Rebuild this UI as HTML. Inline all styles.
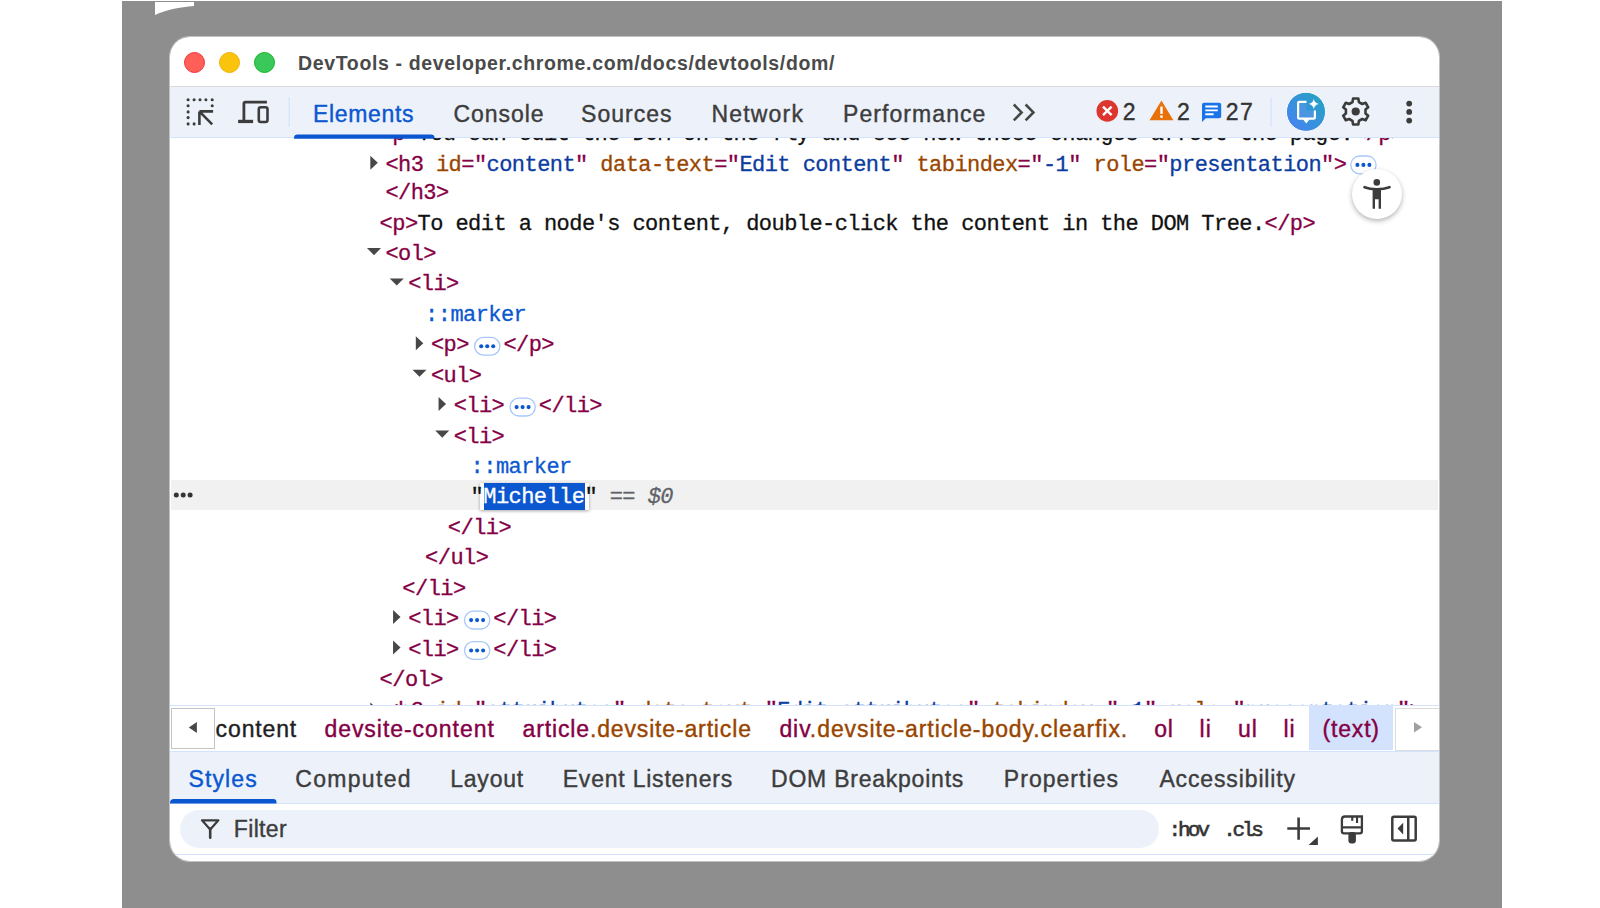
<!DOCTYPE html>
<html><head><meta charset="utf-8"><style>
html,body{margin:0;padding:0}
body{width:1600px;height:908px;position:relative;overflow:hidden;background:#fff;font-family:"Liberation Sans",sans-serif}
.a{position:absolute}
#bg{left:122px;top:1px;width:1380px;height:907px;background:#8e8e8e}
#win{left:0;top:0;width:1600px;height:908px;clip-path:inset(37px 161px 47px 170px round 20px);background:#fff}
#winb{left:170px;top:37px;width:1269px;height:824px;border-radius:20px;box-shadow:0 0 0 1px #c2c2c2;pointer-events:none}
.s{position:absolute;white-space:pre;font-family:"Liberation Sans",sans-serif;-webkit-text-stroke:0.4px currentColor}
.m{position:absolute;white-space:pre;font-family:"Liberation Mono",monospace;font-size:22px;line-height:30px;letter-spacing:-0.56px;color:#111;-webkit-text-stroke:0.3px currentColor}
.tg{color:#850045}
.an{color:#994500}
.av{color:#0b3ca0}
.ps{color:#0b57d0}
.pill{display:inline-block;position:relative;width:24px;height:17px;border:1.3px solid #a8c7fa;border-radius:10px;vertical-align:middle}
svg{position:absolute;left:0;top:0}
</style></head><body>
<div id="bg" class="a"></div>
<svg width="1600" height="40" style="left:0;top:0"><path d="M155 2 H194 V6 C180 7 165 10 155 15 Z" fill="#fff"/></svg>
<div id="win" class="a">
<div class="a" style="left:170px;top:37px;width:1270px;height:49px;background:#fff"></div>
<div class="a" style="left:183.9px;top:51.9px;width:19.2px;height:19.2px;border-radius:50%;background:#ff5f57;border:1px solid #f0313a"></div>
<div class="a" style="left:219.1px;top:51.9px;width:19.2px;height:19.2px;border-radius:50%;background:#fac40c;border:1px solid #eeb00f"></div>
<div class="a" style="left:254.20000000000002px;top:51.9px;width:19.2px;height:19.2px;border-radius:50%;background:#39c859;border:1px solid #12b424"></div>
<div class="s" style="left:298px;top:54.4px;font-size:19.5px;line-height:19.5px;font-weight:bold;letter-spacing:.65px;-webkit-text-stroke:0;color:#4a4a4a">DevTools - developer.chrome.com/docs/devtools/dom/</div>
<div class="a" style="left:170px;top:86px;width:1270px;height:1px;background:#dadada"></div>
<div class="a" style="left:170px;top:87px;width:1270px;height:50px;background:#edf2fa"></div>
<div class="a" style="left:170px;top:137px;width:1270px;height:1px;background:#d3e3fd"></div>
<div class="s" style="left:313.00px;top:103.00px;font-size:23px;line-height:23px;letter-spacing:0.66px;color:#0b57d0;font-weight:400;">Elements</div>
<div class="s" style="left:453.40px;top:103.00px;font-size:23px;line-height:23px;letter-spacing:0.98px;color:#3d3d3d;font-weight:400;">Console</div>
<div class="s" style="left:581.10px;top:103.00px;font-size:23px;line-height:23px;letter-spacing:1.02px;color:#3d3d3d;font-weight:400;">Sources</div>
<div class="s" style="left:711.40px;top:103.00px;font-size:23px;line-height:23px;letter-spacing:1.19px;color:#3d3d3d;font-weight:400;">Network</div>
<div class="s" style="left:843.00px;top:103.00px;font-size:23px;line-height:23px;letter-spacing:1.07px;color:#3d3d3d;font-weight:400;">Performance</div>
<div class="s" style="left:1122.80px;top:100.50px;font-size:23px;line-height:23px;letter-spacing:0px;color:#333;font-weight:400;">2</div>
<div class="s" style="left:1177.00px;top:100.50px;font-size:23px;line-height:23px;letter-spacing:0px;color:#333;font-weight:400;">2</div>
<div class="s" style="left:1225.80px;top:100.50px;font-size:23px;line-height:23px;letter-spacing:1.4px;color:#333;font-weight:400;">27</div>
<div class="a" style="left:170px;top:138px;width:1270px;height:567px;overflow:hidden">
<div class="a" style="left:-170px;top:-138px;width:1600px;height:908px">
<div class="a" style="left:171.3px;top:480px;width:1266.3px;height:30px;background:#f1f1f1"></div>
<svg width="1600" height="908"><circle cx="176.3" cy="495.1" r="2.5" fill="#333"/><circle cx="183.2" cy="495.1" r="2.5" fill="#333"/><circle cx="190.1" cy="495.1" r="2.5" fill="#333"/></svg>
<div class="m" style="left:379.60px;top:120.30px;"><span class="tg">&lt;p&gt;</span>You can edit the DOM on the fly and see how these changes affect the page.<span class="tg">&lt;/p&gt;</span></div>
<div class="m" style="left:385.40px;top:150.70px;"><span class="tg">&lt;h3 </span><span class="an">id</span><span class="tg">="</span><span class="av">content</span><span class="tg">" </span><span class="an">data-text</span><span class="tg">="</span><span class="av">Edit content</span><span class="tg">" </span><span class="an">tabindex</span><span class="tg">="</span><span class="av">-1</span><span class="tg">" </span><span class="an">role</span><span class="tg">="</span><span class="av">presentation</span><span class="tg">"&gt;</span></div>
<div class="m" style="left:385.40px;top:178.50px;"><span class="tg">&lt;/h3&gt;</span></div>
<div class="m" style="left:379.60px;top:209.50px;"><span class="tg">&lt;p&gt;</span>To edit a node's content, double-click the content in the DOM Tree.<span class="tg">&lt;/p&gt;</span></div>
<div class="m" style="left:385.40px;top:239.93px;"><span class="tg">&lt;ol&gt;</span></div>
<div class="m" style="left:408.15px;top:270.36px;"><span class="tg">&lt;li&gt;</span></div>
<div class="m" style="left:425.10px;top:300.79px;"><span class="ps">::marker</span></div>
<div class="m" style="left:430.90px;top:331.22px;"><span class="tg">&lt;p&gt;</span></div>
<div class="m" style="left:503.42px;top:331.22px;"><span class="tg">&lt;/p&gt;</span></div>
<div class="m" style="left:430.90px;top:361.65px;"><span class="tg">&lt;ul&gt;</span></div>
<div class="m" style="left:453.65px;top:392.08px;"><span class="tg">&lt;li&gt;</span></div>
<div class="m" style="left:538.81px;top:392.08px;"><span class="tg">&lt;/li&gt;</span></div>
<div class="m" style="left:453.65px;top:422.51px;"><span class="tg">&lt;li&gt;</span></div>
<div class="m" style="left:470.60px;top:452.94px;"><span class="ps">::marker</span></div>
<div class="a" style="left:480px;top:482.7px;width:108.7px;height:27.5px;background:#fff;box-shadow:0 1px 3px rgba(0,0,0,.35)"></div>
<div class="a" style="left:484.2px;top:482.7px;width:100.6px;height:27px;background:#0b57d0"></div>
<div class="m" style="left:470.60px;top:483.00px;">"<span style="color:#fff">Michelle</span>" <span style="color:#5f6368">==</span> <span style="color:#5f6368;font-style:italic">$0</span></div>
<div class="m" style="left:447.85px;top:513.80px;"><span class="tg">&lt;/li&gt;</span></div>
<div class="m" style="left:425.10px;top:544.23px;"><span class="tg">&lt;/ul&gt;</span></div>
<div class="m" style="left:402.35px;top:574.66px;"><span class="tg">&lt;/li&gt;</span></div>
<div class="m" style="left:408.15px;top:605.09px;"><span class="tg">&lt;li&gt;</span></div>
<div class="m" style="left:493.31px;top:605.09px;"><span class="tg">&lt;/li&gt;</span></div>
<div class="m" style="left:408.15px;top:635.52px;"><span class="tg">&lt;li&gt;</span></div>
<div class="m" style="left:493.31px;top:635.52px;"><span class="tg">&lt;/li&gt;</span></div>
<div class="m" style="left:379.60px;top:665.95px;"><span class="tg">&lt;/ol&gt;</span></div>
<div class="m" style="left:385.40px;top:697.38px;"><span class="tg">&lt;h3 </span><span class="an">id</span><span class="tg">="</span><span class="av">attributes</span><span class="tg">" </span><span class="an">data-text</span><span class="tg">="</span><span class="av">Edit attributes</span><span class="tg">" </span><span class="an">tabindex</span><span class="tg">="</span><span class="av">-1</span><span class="tg">" </span><span class="an">role</span><span class="tg">="</span><span class="av">presentation</span><span class="tg">"&gt;</span></div>
<svg width="1600" height="908"><path d="M370.30 155.70 L377.80 162.70 L370.30 169.70Z" fill="#474747"/><path d="M367.00 248.03 L381.00 248.03 L374.00 255.13Z" fill="#474747"/><path d="M389.75 278.46 L403.75 278.46 L396.75 285.56Z" fill="#474747"/><path d="M415.80 336.22 L423.30 343.22 L415.80 350.22Z" fill="#474747"/><path d="M412.50 369.75 L426.50 369.75 L419.50 376.85Z" fill="#474747"/><path d="M438.55 397.08 L446.05 404.08 L438.55 411.08Z" fill="#474747"/><path d="M435.25 430.61 L449.25 430.61 L442.25 437.71Z" fill="#474747"/><path d="M393.05 610.09 L400.55 617.09 L393.05 624.09Z" fill="#474747"/><path d="M393.05 640.52 L400.55 647.52 L393.05 654.52Z" fill="#474747"/><path d="M370.30 702.38 L377.80 709.38 L370.30 716.38Z" fill="#474747"/><rect x="1350.80" y="156.00" width="25.3" height="17.8" rx="8.9" fill="#fff" stroke="#a8c7fa" stroke-width="1.3"/><circle cx="1357.40" cy="164.90" r="2.05" fill="#0b57d0"/><circle cx="1363.40" cy="164.90" r="2.05" fill="#0b57d0"/><circle cx="1369.40" cy="164.90" r="2.05" fill="#0b57d0"/><rect x="474.62" y="337.32" width="25.3" height="17.8" rx="8.9" fill="#fff" stroke="#a8c7fa" stroke-width="1.3"/><circle cx="481.22" cy="346.22" r="2.05" fill="#0b57d0"/><circle cx="487.22" cy="346.22" r="2.05" fill="#0b57d0"/><circle cx="493.22" cy="346.22" r="2.05" fill="#0b57d0"/><rect x="510.01" y="398.18" width="25.3" height="17.8" rx="8.9" fill="#fff" stroke="#a8c7fa" stroke-width="1.3"/><circle cx="516.61" cy="407.08" r="2.05" fill="#0b57d0"/><circle cx="522.61" cy="407.08" r="2.05" fill="#0b57d0"/><circle cx="528.61" cy="407.08" r="2.05" fill="#0b57d0"/><rect x="464.51" y="611.19" width="25.3" height="17.8" rx="8.9" fill="#fff" stroke="#a8c7fa" stroke-width="1.3"/><circle cx="471.11" cy="620.09" r="2.05" fill="#0b57d0"/><circle cx="477.11" cy="620.09" r="2.05" fill="#0b57d0"/><circle cx="483.11" cy="620.09" r="2.05" fill="#0b57d0"/><rect x="464.51" y="641.62" width="25.3" height="17.8" rx="8.9" fill="#fff" stroke="#a8c7fa" stroke-width="1.3"/><circle cx="471.11" cy="650.52" r="2.05" fill="#0b57d0"/><circle cx="477.11" cy="650.52" r="2.05" fill="#0b57d0"/><circle cx="483.11" cy="650.52" r="2.05" fill="#0b57d0"/></svg>
<div class="a" style="left:1351.6px;top:169.3px;width:50px;height:50px;border-radius:50%;background:#fff;box-shadow:0 2px 5px rgba(0,0,0,.3)"></div>
<svg width="1600" height="908"><circle cx="1376.8" cy="182.4" r="3.3" fill="#3c3c3c"/><path d="M1364.5 187.2 C1369 189 1373 189.2 1376.8 189.2 C1380.6 189.2 1384.6 189 1389.5 187.2" stroke="#3c3c3c" stroke-width="2.6" fill="none" stroke-linecap="round"/><path d="M1372.6 188.5 H1381 V208.7 H1378.6 V199.2 H1375 V208.7 H1372.6Z" fill="#3c3c3c"/></svg>
</div></div>
<div class="a" style="left:170px;top:705px;width:1270px;height:1px;background:#d3e3fd"></div>
<div class="a" style="left:170px;top:706px;width:1270px;height:45px;background:#fff"></div>
<div class="a" style="left:1308.9px;top:706px;width:84.2px;height:44px;background:#d3e3fd"></div>
<div class="a" style="left:171.2px;top:707.7px;width:41.5px;height:39.7px;border:1px solid #c4c4c4;background:#fff"></div>
<div class="a" style="left:1395.3px;top:708.3px;width:45px;height:40.7px;border:1px solid #dcdcdc;background:#fff"></div>
<svg width="1600" height="908"><path d="M188.8 727.5 L196.9 722 V733Z" fill="#474747"/><path d="M1422 727.2 L1414 721.9 V732.4Z" fill="#a0a0a0"/></svg>
<div class="s" style="left:215.60px;top:717.90px;font-size:23px;line-height:23px;letter-spacing:0.87px;color:#1f1f1f;font-weight:400;">content</div>
<div class="s" style="left:324.40px;top:717.90px;font-size:23px;line-height:23px;letter-spacing:0.96px;color:#850045;font-weight:400;">devsite-content</div>
<div class="s" style="left:522.60px;top:717.90px;font-size:23px;line-height:23px;letter-spacing:0.85px;color:#850045;font-weight:400;">article<span style="color:#994500">.devsite-article</span></div>
<div class="s" style="left:779.40px;top:717.90px;font-size:23px;line-height:23px;letter-spacing:0.92px;color:#850045;font-weight:400;">div<span style="color:#994500">.devsite-article-body.clearfix.</span></div>
<div class="s" style="left:1154.30px;top:717.90px;font-size:23px;line-height:23px;letter-spacing:0.7px;color:#850045;font-weight:400;">ol</div>
<div class="s" style="left:1199.60px;top:717.90px;font-size:23px;line-height:23px;letter-spacing:1.0px;color:#850045;font-weight:400;">li</div>
<div class="s" style="left:1237.90px;top:717.90px;font-size:23px;line-height:23px;letter-spacing:1.0px;color:#850045;font-weight:400;">ul</div>
<div class="s" style="left:1283.40px;top:717.90px;font-size:23px;line-height:23px;letter-spacing:1.0px;color:#850045;font-weight:400;">li</div>
<div class="s" style="left:1322.60px;top:717.90px;font-size:23px;line-height:23px;letter-spacing:0.8px;color:#850045;font-weight:400;">(text)</div>
<div class="a" style="left:170px;top:750.5px;width:1270px;height:1px;background:#d3e3fd"></div>
<div class="a" style="left:170px;top:751.5px;width:1270px;height:51px;background:#edf2fa"></div>
<div class="a" style="left:170px;top:802.5px;width:1270px;height:1px;background:#d3e3fd"></div>
<div class="a" style="left:170px;top:799px;width:106.5px;height:8px;border-radius:4px 4px 0 0;background:#0b57d0;clip-path:inset(0 0 3.5px 0)"></div>
<div class="s" style="left:188.40px;top:768.00px;font-size:23px;line-height:23px;letter-spacing:1.15px;color:#0b57d0;font-weight:400;">Styles</div>
<div class="s" style="left:295.25px;top:768.00px;font-size:23px;line-height:23px;letter-spacing:1.31px;color:#3d3d3d;font-weight:400;">Computed</div>
<div class="s" style="left:450.25px;top:768.00px;font-size:23px;line-height:23px;letter-spacing:0.77px;color:#3d3d3d;font-weight:400;">Layout</div>
<div class="s" style="left:562.75px;top:768.00px;font-size:23px;line-height:23px;letter-spacing:0.78px;color:#3d3d3d;font-weight:400;">Event Listeners</div>
<div class="s" style="left:771.00px;top:768.00px;font-size:23px;line-height:23px;letter-spacing:0.77px;color:#3d3d3d;font-weight:400;">DOM Breakpoints</div>
<div class="s" style="left:1003.80px;top:768.00px;font-size:23px;line-height:23px;letter-spacing:1.04px;color:#3d3d3d;font-weight:400;">Properties</div>
<div class="s" style="left:1159.40px;top:768.00px;font-size:23px;line-height:23px;letter-spacing:0.87px;color:#3d3d3d;font-weight:400;">Accessibility</div>
<div class="a" style="left:180px;top:809.8px;width:979.4px;height:38.2px;border-radius:19.1px;background:#edf2fa"></div>
<div class="a" style="left:170px;top:853.5px;width:1270px;height:1px;background:#d3e3fd"></div>
<div class="s" style="left:233.80px;top:818.00px;font-size:23px;line-height:23px;letter-spacing:0.35px;color:#3d3d3d;font-weight:400;">Filter</div>
<div class="s" style="left:1168.4px;top:820px;font-family:'Liberation Mono',monospace;font-size:21px;line-height:21px;letter-spacing:-2.9px;-webkit-text-stroke:0.6px #333;color:#333">:hov</div>
<div class="s" style="left:1223.3px;top:820px;font-family:'Liberation Mono',monospace;font-size:21px;line-height:21px;letter-spacing:-3.3px;-webkit-text-stroke:0.6px #333;color:#333">.cls</div>
<svg width="1600" height="908"><circle cx="194.10" cy="99.80" r="1.55" fill="#3c3c3c"/><circle cx="200.00" cy="99.80" r="1.55" fill="#3c3c3c"/><circle cx="205.90" cy="99.80" r="1.55" fill="#3c3c3c"/><circle cx="188.10" cy="105.75" r="1.55" fill="#3c3c3c"/><circle cx="188.10" cy="111.90" r="1.55" fill="#3c3c3c"/><circle cx="188.10" cy="117.60" r="1.55" fill="#3c3c3c"/><circle cx="212.20" cy="105.75" r="1.55" fill="#3c3c3c"/><circle cx="194.10" cy="123.90" r="1.55" fill="#3c3c3c"/><circle cx="188.10" cy="99.80" r="1.55" fill="#3c3c3c"/><circle cx="212.20" cy="99.80" r="1.55" fill="#3c3c3c"/><circle cx="188.10" cy="123.90" r="1.55" fill="#3c3c3c"/><path d="M199.4 111.4 H213.1 M199.4 111.4 V125.1 M199.6 111.6 L212.2 124.4" stroke="#3c3c3c" stroke-width="2.6" fill="none"/><path d="M266.9 102.2 H245.5 Q243.9 102.2 243.9 103.8 V121.5" stroke="#3c3c3c" stroke-width="2.8" fill="none"/><rect x="238.1" y="119.8" width="15" height="3.3" fill="#3c3c3c"/><rect x="258.8" y="107.3" width="8.7" height="14.7" rx="2" stroke="#3c3c3c" stroke-width="2.6" fill="none"/><rect x="288.5" y="97" width="1.3" height="30" fill="#d3e3fd"/><rect x="1270.4" y="97.6" width="1.3" height="29.2" fill="#d3e3fd"/><path d="M294 138.8 V138 Q294 134.6 297.5 134.6 H431 Q434.6 134.6 434.6 138 V138.8Z" fill="#0b57d0"/><path d="M1013.8 104.5 L1021.6 112.4 L1013.8 120.3 M1025.6 104.5 L1033.4 112.4 L1025.6 120.3" stroke="#474747" stroke-width="2.6" fill="none"/><circle cx="1107.3" cy="110.9" r="10.8" fill="#dc362e"/><path d="M1103 106.6 L1111.6 115.2 M1111.6 106.6 L1103 115.2" stroke="#fff" stroke-width="2.4"/><path d="M1161.45 100.4 L1173.4 120.3 H1149.5Z" fill="#e8710a"/><rect x="1160.3" y="106.6" width="2.4" height="7.3" fill="#fff"/><rect x="1160.3" y="115.4" width="2.4" height="2.4" fill="#fff"/><path d="M1204 102.7 H1219.2 Q1221.2 102.7 1221.2 104.7 V116.3 Q1221.2 118.3 1219.2 118.3 H1205.8 L1202 121.9 V104.7 Q1202 102.7 1204 102.7Z" fill="#1a73e8"/><path d="M1205.3 106.5 H1217.8 M1205.3 110.4 H1217.8 M1205.3 114.2 H1213.6" stroke="#fff" stroke-width="1.9"/><defs><linearGradient id="aig" x1="0" y1="1" x2="1" y2="0"><stop offset="0" stop-color="#4a7ff7"/><stop offset="1" stop-color="#22a6bd"/></linearGradient></defs><circle cx="1306" cy="111.8" r="19.6" fill="url(#aig)" stroke="#fff" stroke-width="1"/><path d="M1298.1 103 Q1298.1 101.9 1299.2 101.9 H1306.5 V110.6 H1314.9 V117.6 Q1314.9 118.7 1313.7 118.7 H1299.2 Q1298.1 118.7 1298.1 117.6Z" fill="#5b9be6" fill-opacity=".55"/><path d="M1306.5 101.9 H1299.2 Q1298.1 101.9 1298.1 103 V117.6 Q1298.1 118.7 1299.2 118.7 H1313.7 Q1314.9 118.7 1314.9 117.6 V110.4" stroke="#fff" stroke-width="2.2" fill="none"/><path d="M1302.4 118.5 H1310.2 L1306.3 123.4Z" fill="#fff"/><path d="M1313.8 98.8 Q1314.5 103.3 1319 104 Q1314.5 104.7 1313.8 109.2 Q1313.1 104.7 1308.6 104 Q1313.1 103.3 1313.8 98.8Z" fill="#fff"/><g transform="translate(1355.7 111.5)"><path d="M-3.19 -9.48 L-2.61 -12.94 L2.61 -12.94 L3.19 -9.48 L6.61 -7.50 L9.90 -8.73 L12.51 -4.21 L9.80 -1.98 L9.80 1.98 L12.51 4.21 L9.90 8.73 L6.61 7.50 L3.19 9.48 L2.61 12.94 L-2.61 12.94 L-3.19 9.48 L-6.61 7.50 L-9.90 8.73 L-12.51 4.21 L-9.80 1.98 L-9.80 -1.98 L-12.51 -4.21 L-9.90 -8.73 L-6.61 -7.50Z" stroke="#3c3c3c" stroke-width="2.6" stroke-linejoin="round" fill="none"/><circle r="4.1" fill="#3c3c3c"/></g><circle cx="1409.2" cy="103.6" r="2.9" fill="#3c3c3c"/><circle cx="1409.2" cy="111.9" r="2.9" fill="#3c3c3c"/><circle cx="1409.2" cy="120.6" r="2.9" fill="#3c3c3c"/><path d="M202 820.3 H218.4 L210.2 829.4Z" stroke="#3c3c3c" stroke-width="2.2" stroke-linejoin="round" fill="none"/><path d="M210.2 828.5 V837.8" stroke="#3c3c3c" stroke-width="2.6" stroke-linecap="round"/><path d="M1298.6 817.4 V839.7 M1287.3 828.5 H1310" stroke="#3c3c3c" stroke-width="2.6"/><path d="M1317.9 836.4 V845 H1308.6Z" fill="#3c3c3c"/><path d="M1361.9 816.5 V831.2 Q1361.9 833.3 1359.8 833.3 H1344 Q1341.9 833.3 1341.9 831.2 V819.6 Q1341.9 816.5 1345 816.5Z M1341.9 827.3 H1361.9" stroke="#3c3c3c" stroke-width="2.3" fill="none"/><rect x="1348.4" y="832" width="7.5" height="11.6" rx="3" fill="#3c3c3c"/><rect x="1351.2" y="816" width="2.1" height="4.8" fill="#3c3c3c"/><rect x="1356" y="816" width="2.1" height="7" fill="#3c3c3c"/><rect x="1392.3" y="816.8" width="23.4" height="23.7" rx="1.5" stroke="#3c3c3c" stroke-width="2.5" fill="none"/><rect x="1407" y="816.8" width="2.5" height="23.7" fill="#3c3c3c"/><path d="M1403.2 822.7 L1397.5 828.6 L1403.2 834.5Z" fill="#3c3c3c"/></svg>
</div>
<div id="winb" class="a"></div>
</body></html>
